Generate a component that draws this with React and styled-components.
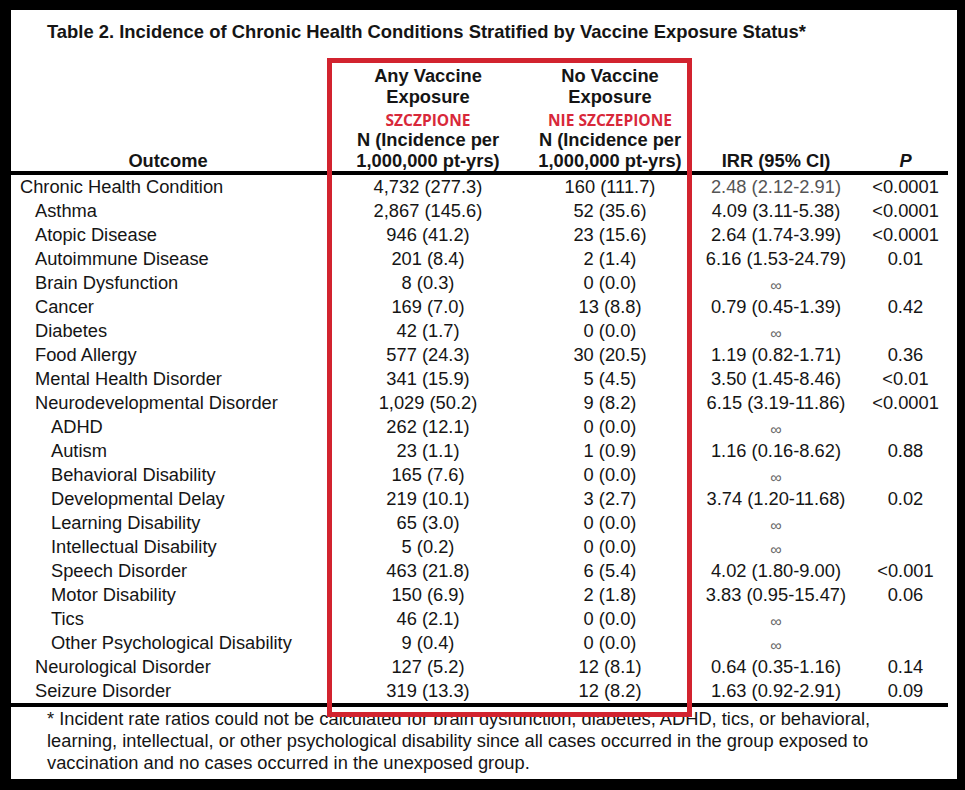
import React from 'react';
import styled, { createGlobalStyle } from 'styled-components';

const GlobalStyle = createGlobalStyle`
  html, body {
    margin: 0;
    padding: 0;
    background: #000;
  }
  body {
    font-family: "Liberation Sans", Arial, sans-serif;
    color: #151515;
  }
`;

// styles
const Frame = styled.div`
  width: 965px;
  height: 790px;
  box-sizing: border-box;
  padding: 10px 8px 11px 11px;
  background: #000;
`;

const Sheet = styled.div`
  position: relative;
  height: 100%;
  background: #fff;
  display: flex;
  flex-direction: column;
`;

const Title = styled.h1`
  margin: 0;
  padding: 12px 0 0 36px;
  font-size: 18.4px;
  line-height: 20px;
  font-weight: bold;
`;

const Table = styled.div`
  width: 937px;
  display: grid;
  grid-template-columns: 314px 206px 158px 174px 85px;
`;

const Head = styled.div`
  height: 129px;
  display: flex;
  flex-direction: column;
  justify-content: flex-end;
  align-items: center;
  text-align: center;
  font-size: 18.3px;
  line-height: 21px;
  font-weight: bold;
  border-bottom: 4px solid #000;
  font-style: ${p => (p.$italic ? 'italic' : 'normal')};
`;

const RedLabel = styled.div`
  margin-top: 4px;
  font-family: "Open Sans", "Noto Sans", sans-serif;
  font-weight: 700;
  font-size: 15.5px;
  line-height: 18px;
  color: #d8283a;
`;

const Cell = styled.div`
  height: 24px;
  line-height: 24px;
  font-size: 18.3px;
  white-space: nowrap;
  text-align: ${p => (p.$left ? 'left' : 'center')};
  padding-left: ${p => p.$indent || 0}px;
  color: ${p => (p.$muted ? '#555' : '#151515')};
  border-bottom: ${p => (p.$last ? '4px solid #000' : 'none')};
`;

const Infinity = styled.span`
  display: inline-block;
  font-size: 16px;
  color: #666;
  transform: translateY(2px);
`;

const Note = styled.p`
  margin: 0;
  padding: 1px 0 0 36px;
  font-size: 18.3px;
  line-height: 22px;
`;

const RedBox = styled.div`
  position: absolute;
  left: 316px;
  top: 48px;
  width: 365px;
  height: 659px;
  box-sizing: border-box;
  border: 5px solid #d2232f;
  pointer-events: none;
`;

const INF = '∞';

const rows = [
  [0, 'Chronic Health Condition', '4,732 (277.3)', '160 (111.7)', '2.48 (2.12-2.91)', '<0.0001'],
  [1, 'Asthma', '2,867 (145.6)', '52 (35.6)', '4.09 (3.11-5.38)', '<0.0001'],
  [1, 'Atopic Disease', '946 (41.2)', '23 (15.6)', '2.64 (1.74-3.99)', '<0.0001'],
  [1, 'Autoimmune Disease', '201 (8.4)', '2 (1.4)', '6.16 (1.53-24.79)', '0.01'],
  [1, 'Brain Dysfunction', '8 (0.3)', '0 (0.0)', INF, ''],
  [1, 'Cancer', '169 (7.0)', '13 (8.8)', '0.79 (0.45-1.39)', '0.42'],
  [1, 'Diabetes', '42 (1.7)', '0 (0.0)', INF, ''],
  [1, 'Food Allergy', '577 (24.3)', '30 (20.5)', '1.19 (0.82-1.71)', '0.36'],
  [1, 'Mental Health Disorder', '341 (15.9)', '5 (4.5)', '3.50 (1.45-8.46)', '<0.01'],
  [1, 'Neurodevelopmental Disorder', '1,029 (50.2)', '9 (8.2)', '6.15 (3.19-11.86)', '<0.0001'],
  [2, 'ADHD', '262 (12.1)', '0 (0.0)', INF, ''],
  [2, 'Autism', '23 (1.1)', '1 (0.9)', '1.16 (0.16-8.62)', '0.88'],
  [2, 'Behavioral Disability', '165 (7.6)', '0 (0.0)', INF, ''],
  [2, 'Developmental Delay', '219 (10.1)', '3 (2.7)', '3.74 (1.20-11.68)', '0.02'],
  [2, 'Learning Disability', '65 (3.0)', '0 (0.0)', INF, ''],
  [2, 'Intellectual Disability', '5 (0.2)', '0 (0.0)', INF, ''],
  [2, 'Speech Disorder', '463 (21.8)', '6 (5.4)', '4.02 (1.80-9.00)', '<0.001'],
  [2, 'Motor Disability', '150 (6.9)', '2 (1.8)', '3.83 (0.95-15.47)', '0.06'],
  [2, 'Tics', '46 (2.1)', '0 (0.0)', INF, ''],
  [2, 'Other Psychological Disability', '9 (0.4)', '0 (0.0)', INF, ''],
  [1, 'Neurological Disorder', '127 (5.2)', '12 (8.1)', '0.64 (0.35-1.16)', '0.14'],
  [1, 'Seizure Disorder', '319 (13.3)', '12 (8.2)', '1.63 (0.92-2.91)', '0.09'],
];

const indents = [9, 24, 40];

export default function App() {
  return (
    <>
      <GlobalStyle />
      <Frame>
        <Sheet>
          <Title>Table 2. Incidence of Chronic Health Conditions Stratified by Vaccine Exposure Status*</Title>
          <Table>
            <Head>Outcome</Head>
            <Head>
              <div>Any Vaccine<br />Exposure</div>
              <RedLabel>SZCZPIONE</RedLabel>
              <div>N (Incidence per<br />1,000,000 pt-yrs)</div>
            </Head>
            <Head>
              <div>No Vaccine<br />Exposure</div>
              <RedLabel>NIE SZCZEPIONE</RedLabel>
              <div>N (Incidence per<br />1,000,000 pt-yrs)</div>
            </Head>
            <Head>IRR (95% CI)</Head>
            <Head $italic>P</Head>

            {rows.map(([level, name, any, none, irr, p], i) => {
              const last = i === rows.length - 1;
              return (
                <React.Fragment key={name}>
                  <Cell $left $indent={indents[level]} $last={last}>{name}</Cell>
                  <Cell $last={last}>{any}</Cell>
                  <Cell $last={last}>{none}</Cell>
                  <Cell $last={last} $muted={i === 0}>
                    {irr === INF ? <Infinity>{INF}</Infinity> : irr}
                  </Cell>
                  <Cell $last={last}>{p}</Cell>
                </React.Fragment>
              );
            })}
          </Table>
          <Note>
            * Incident rate ratios could not be calculated for brain dysfunction, diabetes, ADHD, tics, or behavioral,
            <br />
            learning, intellectual, or other psychological disability since all cases occurred in the group exposed to
            <br />
            vaccination and no cases occurred in the unexposed group.
          </Note>
          <RedBox />
        </Sheet>
      </Frame>
    </>
  );
}
